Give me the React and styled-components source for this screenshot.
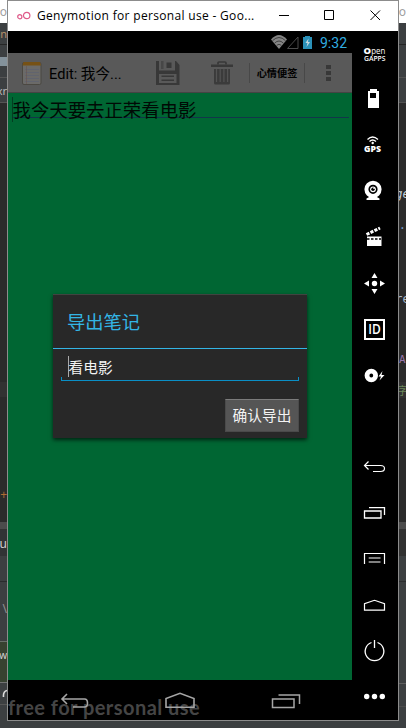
import React from 'react';
import styled, { createGlobalStyle } from 'styled-components';

const GlobalStyle = createGlobalStyle`
  * { box-sizing: border-box; }
  body { margin: 0; background: #3c3f41; overflow: hidden; }
  svg { display: block; flex: none; }
`;

const Desktop = styled.div`
  width: 406px;
  height: 728px;
  display: grid;
  grid-template-columns: 7px 392px 7px;
  overflow: hidden;
  background: #3c3f41;
  font-family: Roboto, 'Noto Sans CJK SC', sans-serif;
`;

const Strip = styled.div`
  display: flex;
  flex-direction: column;
  min-width: 0;
  overflow: hidden;
`;

const Band = styled.div`
  flex: none;
  height: ${p => p.$h}px;
  background: ${p => p.$bg};
  border-bottom: ${p => (p.$line ? `1px solid ${p.$line}` : 'none')};
  color: ${p => p.$color || '#bbb'};
  display: flex;
  align-items: center;
  justify-content: ${p => p.$align || 'flex-end'};
  overflow: hidden;
  white-space: nowrap;
  font: ${p => p.$font || "12px 'Noto Sans', 'Noto Sans CJK SC', sans-serif"};
`;

const Window = styled.div`
  height: 721px;
  border: 1px solid #8c8c8c;
  display: flex;
  flex-direction: column;
  background: #000;
`;

const TitleBar = styled.header`
  height: 30px;
  flex: none;
  background: #fff;
  display: flex;
  align-items: center;
  padding-left: 9px;
`;

const Title = styled.div`
  width: 237px;
  margin-left: 6px;
  white-space: nowrap;
  color: #000;
  font: 12px/16px 'Open Sans', sans-serif;
  letter-spacing: 0.32px;
`;

const Body = styled.div`
  flex: 1;
  display: grid;
  grid-template-columns: 344px 46px;
`;

const Phone = styled.main`
  position: relative;
  display: flex;
  flex-direction: column;
`;

const StatusBar = styled.div`
  height: 22px;
  display: flex;
  align-items: center;
  padding-left: 262px;
`;

const Clock = styled.div`
  margin-left: 6px;
  font-size: 14px;
  line-height: 20px;
  padding-top: 2px;
  color: #31ade0;
`;

const ActionBar = styled.div`
  height: 40px;
  background: #595959;
  border-bottom: 1px solid #444;
  display: flex;
  align-items: center;
`;

const BarTitle = styled.div`
  width: 107px;
  margin-left: 7px;
  font-size: 14.6px;
  white-space: nowrap;
  color: #000;
`;

const Divider = styled.div`
  width: 1px;
  height: 20px;
  background: #484848;
`;

const BarButton = styled.div`
  width: 54px;
  text-align: center;
  font-size: 10.2px;
  font-weight: 700;
  color: #000;
  white-space: nowrap;
`;

const Note = styled.div`
  flex: 1;
  background: #006633;
  padding: 4px 3px 0 4px;
`;

const NoteLine = styled.div`
  height: 21px;
  border-bottom: 1px solid #12364a;
  font-size: 18.4px;
  line-height: 28px;
  color: #000a05;
  display: flex;
  white-space: nowrap;
`;

const Caret = styled.span`
  width: 1px;
  height: ${p => p.$h}px;
  margin-right: ${p => p.$pull || 0}px;
  background: ${p => p.$color};
  flex: none;
`;

const NavBar = styled.div`
  height: 40px;
  position: relative;
`;

const Watermark = styled.div`
  position: absolute;
  left: 0;
  top: 15px;
  font: 700 20px/24px Lato, sans-serif;
  letter-spacing: 0.45px;
  color: #454545;
  white-space: nowrap;
`;

const NavIcons = styled.div`
  position: relative;
  display: flex;
  align-items: center;
  height: 40px;
  padding-left: 52px;
  gap: 58px;
`;

const Dialog = styled.section`
  position: absolute;
  left: 45px;
  top: 263px;
  width: 254px;
  height: 144px;
  background: #282828;
  border-top: 1px solid #404440;
  box-shadow: 0 2px 4px rgba(0, 0, 0, 0.65);
`;

const DialogTitle = styled.h2`
  margin: 0;
  height: 54px;
  padding: 0 14px;
  border-bottom: 1px solid #33b5e5;
  font-size: 18.3px;
  font-weight: 400;
  line-height: 55px;
  color: #33b5e5;
`;

const Field = styled.div`
  margin: 0 8px;
  height: 32px;
  padding: 7px 0 0 7px;
  display: flex;
  font-size: 14.7px;
  line-height: 24px;
  color: #f3f3f3;
  background:
    linear-gradient(#0a8fc6, #0a8fc6) 0 100% / 1px 4px no-repeat,
    linear-gradient(#0a8fc6, #0a8fc6) 100% 100% / 1px 4px no-repeat,
    linear-gradient(#0a8fc6, #0a8fc6) 0 100% / 100% 1px no-repeat;
`;

const ConfirmButton = styled.button`
  display: block;
  margin: 18px 8px 0 auto;
  width: 74px;
  height: 33px;
  padding: 1px 0 0;
  border: 1px solid #4a4a4a;
  border-top-color: #7c7c7c;
  background: #555;
  color: #f3f3f3;
  font: 14.7px/30px Roboto, 'Noto Sans CJK SC', sans-serif;
`;

const Sidebar = styled.aside`
  display: flex;
  flex-direction: column;
`;

const Tool = styled.div`
  height: ${p => p.$h || 46}px;
  flex: none;
`;

const mono = "12px 'DejaVu Sans Mono', monospace";

const leftBands = [
  { h: 23, bg: '#fff', text: 'o', color: '#a0a0a0' },
  { h: 22, bg: '#3c3f41', line: '#252525', text: 'n', color: '#b8916a', font: "11px 'Noto Sans', sans-serif" },
  { h: 12, bg: '#3c3f41' },
  { h: 9, bg: '#84929b' },
  { h: 12, bg: '#3c3f41', line: '#555' },
  { h: 25, bg: '#3c3f41', line: '#555', text: 'xr', color: '#bbb', font: "11px 'Noto Sans', sans-serif" },
  { h: 279, bg: '#2b2b2b' },
  { h: 15, bg: '#323232' },
  { h: 87, bg: '#2b2b2b' },
  { h: 20, bg: '#2b2b2b', text: '+', color: '#b06c32' },
  { h: 18, bg: '#2b2b2b' },
  { h: 8, bg: '#4c4c4c', line: '#333' },
  { h: 26, bg: '#313335', text: 'u', color: '#d0d0d0' },
  { h: 26, bg: '#3c3f41', line: '#292b2c' },
  { h: 14, bg: '#3c3f41' },
  { h: 24, bg: '#3c3f41', text: '\\', color: '#919191' },
  { h: 22, bg: '#3c3f41', line: '#68706a' },
  { h: 26, bg: '#374230', text: 'w', color: '#d0d0d0', font: "10px 'Noto Sans', sans-serif" },
  { h: 15, bg: '#374230', line: '#737373' },
  { h: 22, bg: '#3c3f41', line: '#555', arc: true },
  { h: 22, bg: '#3c3f41' },
];

const rightBands = [
  { h: 23, bg: '#fff', text: 'o', color: '#a0a0a0' },
  { h: 22, bg: '#3c3f41', line: '#252525' },
  { h: 33, bg: '#3c3f41', line: '#515151' },
  { h: 25, bg: '#3c3f41', line: '#515151' },
  { h: 81, bg: '#2b2b2b' },
  { h: 20, bg: '#2b2b2b', text: 'ge', color: '#c3ced8', align: 'center', font: `italic ${mono}` },
  { h: 13, bg: '#2b2b2b' },
  { h: 16, bg: '#2b2b2b', text: '.', color: '#7398c4', font: mono },
  { h: 56, bg: '#2b2b2b' },
  { h: 20, bg: '#2b2b2b', text: 're', color: '#a9b7c6', align: 'center', font: mono },
  { h: 40, bg: '#2b2b2b' },
  { h: 20, bg: '#2b2b2b', text: 'A', color: '#9876aa', align: 'flex-start', font: "11px 'DejaVu Sans Mono', monospace" },
  { h: 13, bg: '#2b2b2b' },
  { h: 16, bg: '#323232', text: '字', color: '#6a8759', align: 'center', font: "11px/16px 'Noto Sans CJK SC', sans-serif" },
  { h: 124, bg: '#2b2b2b' },
  { h: 8, bg: '#4c4c4c', line: '#333' },
  { h: 26, bg: '#313131' },
  { h: 26, bg: '#3c3f41', line: '#2b2d2e' },
  { h: 102, bg: '#3c3f41', line: '#5e5e5e' },
  { h: 23, bg: '#3c3f41', line: '#4c4c4c' },
  { h: 21, bg: '#3c3f41' },
];

const Bands = ({ items }) => (
  <Strip>
    {items.map((b, i) => (
      <Band key={i} $h={b.h} $bg={b.bg} $line={b.line} $color={b.color} $align={b.align} $font={b.font}>
        {b.text}
        {b.arc && (
          <svg width="5" height="10" viewBox="0 0 5 10" fill="none" stroke="#ddd" strokeWidth="1.6">
            <path d="M5 1.5Q1 2.5 1.5 8" />
          </svg>
        )}
      </Band>
    ))}
  </Strip>
);

const Icon = ({ children, h = 46 }) => (
  <Tool $h={h}>
    <svg width="46" height={h} viewBox={`0 0 46 ${h}`} fill="none" stroke="none">{children}</svg>
  </Tool>
);

const NotepadIcon = () => (
  <svg width="20" height="24" viewBox="0 0 20 24">
    <rect x="0.5" y="1.5" width="18.5" height="22" rx="1.5" fill="#6b6a68" stroke="#4b4842" />
    <path d="M1.5 1h16.5l1 3.500H.5z" fill="#765115" />
    <path d="M3 8.5h14M3 11.5h14M3 14.5h14M3 17.5h14M3 20.5h14" stroke="#5a5f72" strokeWidth="0.6" />
    <path d="M4.5 5v18" stroke="#665350" strokeWidth="0.6" />
  </svg>
);

const SaveIcon = () => (
  <svg width="24" height="24" viewBox="0 0 24 24">
    <path fillRule="evenodd" fill="#383838" d="M0 0h3v9.5h16V0h1l3.500 4v20H0zM3 13v9h17.500v-9z" />
    <path fill="#383838" d="M10.500 1.5h5V7h-5zM5.500 14.500h12.500V16H5.500zM5.500 18.500h12.500V20H5.500z" />
    <path fill="#474747" d="M5 0h2.500v8H5z" />
  </svg>
);

const TrashIcon = () => (
  <svg width="22" height="24" viewBox="0 0 22 24">
    <path d="M7 3.5V2q0-1 1-1h6q1 0 1 1v1.5" fill="none" stroke="#383838" strokeWidth="1.7" />
    <path d="M0 3.5h22v2.500H0z" fill="#383838" />
    <path d="M3 8h16v14q0 1.500-1.500 1.500h-13Q3 23.500 3 22z" fill="#3b3b3b" />
    <path d="M5.500 8v13M9.200 8v13M12.900 8v13M16.600 8v13" fill="none" stroke="#545454" strokeWidth="1.2" />
  </svg>
);

export default function App() {
  return (
    <>
      <GlobalStyle />
      <Desktop>
        <Bands items={leftBands} />
        <Window>
          <TitleBar>
            <svg width="14" height="12" viewBox="0 0 14 12" fill="none" stroke="#df5b8a" strokeWidth="1.2">
              <circle cx="2.8" cy="6.7" r="2.1" />
              <circle cx="9.7" cy="5.5" r="3.2" />
            </svg>
            <Title>Genymotion for personal use - Goo...</Title>
            <svg width="112" height="20" viewBox="0 0 112 20" fill="none" stroke="#000">
              <path d="M5 9.5h10M50.5 4.5h9v9h-9zM96.5 4.5l9.5 9.5M106 4.5l-9.5 9.5" />
            </svg>
          </TitleBar>
          <Body>
            <Phone>
              <StatusBar>
                <svg width="44" height="22" viewBox="0 0 44 22">
                  <path d="M1 8.5Q9-.5 17 8.5L9 18z" fill="#858585" />
                  <path d="M2.5 9.7Q9 3.3 15.5 9.7M4.7 12Q9 8 13.3 12M6.7 14.3Q9 12.3 11.3 14.3" fill="none" stroke="#222" strokeWidth="0.7" />
                  <path d="M17.5 17.5L28 6v11.5z" fill="none" stroke="#4b4b4b" />
                  <path d="M34 6h2V5h5v1h2v12h-9z" fill="#2b91b8" transform="translate(-1 0)" />
                  <path d="M38.5 7.5l-3 4.5h2l-1 4 3.5-5h-2z" fill="#c5d8de" />
                </svg>
                <Clock>9:32</Clock>
              </StatusBar>
              <ActionBar>
                <svg width="14" height="24" />
                <NotepadIcon />
                <BarTitle>Edit: 我今...</BarTitle>
                <SaveIcon />
                <svg width="31" height="24" />
                <TrashIcon />
                <svg width="16" height="24" />
                <Divider />
                <BarButton>心情便签</BarButton>
                <Divider />
                <svg width="38" height="24" viewBox="0 0 38 24" fill="#383838">
                  <path d="M21 4h5v4h-5zM21 10h5v4h-5zM21 16h5v4h-5z" />
                </svg>
              </ActionBar>
              <Note>
                <NoteLine><Caret $h={25} $pull={-0.5} $color="#033d22" />我今天要去正荣看电影</NoteLine>
              </Note>
              <NavBar>
                <Watermark>free for personal use</Watermark>
                <NavIcons>
                  <svg width="30" height="20" viewBox="0 0 30 20" fill="none" stroke="#a6a6a6" strokeWidth="1.6">
                    <path d="M7 4L2 9l5 5M2 9h22.5q3 0 3 4t-3 4H13" />
                  </svg>
                  <svg width="48" height="20" viewBox="0 0 48 20" fill="none" stroke="#a6a6a6" strokeWidth="1.6">
                    <path d="M18 17.3V8.500L32 3.3l14 5.200v8.8z" />
                  </svg>
                  <svg width="48" height="20" viewBox="0 0 48 20" fill="none" stroke="#a6a6a6" strokeWidth="1.5">
                    <path d="M18.500 9H40v8.500H18.500zM24.500 5H45.500v9" />
                  </svg>
                </NavIcons>
              </NavBar>
              <Dialog>
                <DialogTitle>导出笔记</DialogTitle>
                <Field><Caret $h={21} $pull={-0.5} $color="#aaa" />看电影</Field>
                <ConfirmButton>确认导出</ConfirmButton>
              </Dialog>
            </Phone>
            <Sidebar>
              <Icon h={45}>
                <g fill="#fff" fontFamily="Open Sans">
                  <text x="11.5" y="22.5" fontSize="9.5" fontWeight="800">O</text>
                  <text x="19.3" y="22.5" fontSize="8.5" textLength="14" lengthAdjust="spacingAndGlyphs">pen</text>
                  <text x="12" y="29.5" fontSize="6.8" fontWeight="600" textLength="21.500" lengthAdjust="spacingAndGlyphs">GAPPS</text>
                </g>
              </Icon>
              <Icon>
                <path fillRule="evenodd" fill="#fff" d="M18 13h7v2h2v17H16V15h2zM18 17v5h6v-5z" />
              </Icon>
              <Icon>
                <path d="M15.5 17.5Q20.5 12.5 26 17.5M17.5 19.5Q20.5 16.5 24 19.5" stroke="#fff" strokeWidth="1.3" />
                <circle cx="20.7" cy="21" r="1.2" fill="#fff" />
                <text x="20.6" y="30" fill="#fff" fontFamily="Open Sans" fontWeight="800" fontSize="7.8" textAnchor="middle" textLength="17" lengthAdjust="spacingAndGlyphs">GPS</text>
              </Icon>
              <Icon>
                <circle cx="21" cy="21.3" r="6.6" stroke="#fff" strokeWidth="4" />
                <circle cx="21" cy="21.3" r="2.9" fill="#fff" />
                <circle cx="21" cy="21.3" r="1.7" fill="#000" />
                <circle cx="22" cy="20.3" r="0.8" fill="#fff" />
                <path d="M18 28.5h6l3.5 2v1.5h-13v-1.5z" fill="#fff" />
              </Icon>
              <Icon>
                <path d="M15 22.5h14.5V32H15z" fill="#fff" />
                <path d="M15 25h14" stroke="#000" strokeWidth="1.3" strokeDasharray="2.5 1.5" />
                <path d="M14.5 20.5L28 14" stroke="#fff" strokeWidth="3" strokeDasharray="3.2 1.2" />
              </Icon>
              <Icon>
                <circle cx="22.5" cy="23.5" r="2.7" fill="#fff" />
                <path fill="#fff" d="M22.5 13l3 5h-6zM22.5 34l3-5h-6zM12 23.5l5-3v6zM33 23.5l-5-3v6z" />
              </Icon>
              <Icon>
                <rect x="13" y="14" width="19" height="19" stroke="#fff" strokeWidth="2" />
                <text x="22.5" y="28.3" fill="#fff" fontFamily="Open Sans" fontWeight="600" fontSize="13.5" textAnchor="middle" textLength="12.5" lengthAdjust="spacingAndGlyphs">ID</text>
              </Icon>
              <Icon>
                <circle cx="19.3" cy="23.5" r="4.3" stroke="#fff" strokeWidth="4.8" />
                <path fill="#fff" d="M30.5 19l-4 5.5h2.5l-1.5 4 5-5.5h-3z" />
              </Icon>
              <Tool $h={45} />
              <Icon>
                <path d="M16.5 18.5l-4 4 4 4M12.5 22.5h16q4 0 4 3t-4 3H21" stroke="#fff" strokeWidth="1.2" />
              </Icon>
              <Icon>
                <path d="M12.5 22h16.5v7H12.5zM17 18.7h15.5V26" stroke="#fff" strokeWidth="1.3" />
              </Icon>
              <Icon>
                <path d="M12.5 29V18.5h20V29M16.7 23h11.8M16.7 27h11.8" stroke="#fff" strokeWidth="1.2" />
              </Icon>
              <Icon>
                <path d="M12.5 29.2v-6.5l10-3.4 10 3.4v6.5z" stroke="#fff" strokeWidth="1.2" />
              </Icon>
              <Icon>
                <path d="M19.5 15.5a9.3 9.3 0 1 0 6 0M22.5 13v8" stroke="#fff" strokeWidth="1.3" />
              </Icon>
              <Icon>
                <g fill="#fff">
                  <circle cx="14.7" cy="23.5" r="2.7" />
                  <circle cx="22.5" cy="23.5" r="2.7" />
                  <circle cx="30.3" cy="23.5" r="2.7" />
                </g>
              </Icon>
            </Sidebar>
          </Body>
        </Window>
        <Bands items={rightBands} />
      </Desktop>
    </>
  );
}
